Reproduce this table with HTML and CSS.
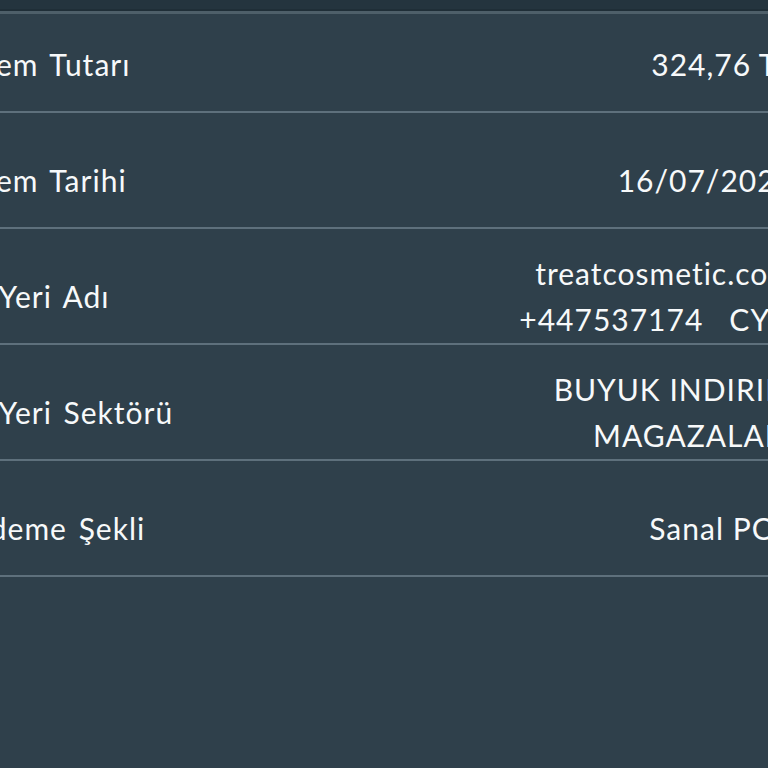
FILE: index.html
```html
<!DOCTYPE html>
<html lang="tr">
<head>
<meta charset="utf-8">
<link rel="stylesheet" href="styles.css">
</head>
<body>
<div class="screen">
  <div class="topbar"></div>
  <div class="viewport">
    <div class="list">
      <div class="row">
        <div class="label">İşlem Tutarı</div>
        <div class="value">324,76 TL</div>
      </div>
      <div class="row">
        <div class="label">İşlem Tarihi</div>
        <div class="value">16/07/2024</div>
      </div>
      <div class="row">
        <div class="label">İş Yeri Adı</div>
        <div class="value">treatcosmetic.com<br>+447537174&nbsp;&nbsp;&nbsp;CYO</div>
      </div>
      <div class="row">
        <div class="label">İş Yeri Sektörü</div>
        <div class="value">BUYUK INDIRIM<br>MAGAZALARI</div>
      </div>
      <div class="row">
        <div class="label">Ödeme Şekli</div>
        <div class="value">Sanal POS</div>
      </div>
    </div>
  </div>
</div>
</body>
</html>
```
FILE: styles.css
```css
html, body {
  margin: 0;
  padding: 0;
  height: 100%;
}
body {
  background: #2f404b;
  font-family: Lato, "Open Sans", sans-serif;
  color: #f7f9fa;
}
.screen {
  height: 768px;
  overflow: hidden;
  display: flex;
  flex-direction: column;
}
.topbar {
  height: 11px;
  background: #24343e;
  border-bottom: 3px solid #4e5f69;
  box-shadow: inset 0 -2px 0 #1f2e37;
  flex: none;
}
.viewport {
  flex: 1;
  overflow: hidden;
}
.list {
  margin-top: -17px;
  margin-left: -35px;
  width: calc(100% + 61px);
}
.row {
  box-sizing: border-box;
  height: 116px;
  padding-top: 20px;
  border-bottom: 2px solid #5e707c;
  display: flex;
  align-items: center;
  justify-content: space-between;
}
.label {
  font-size: 30px;
  line-height: 46px;
  letter-spacing: 1px;
  word-spacing: 3px;
  white-space: nowrap;
}
.value {
  font-size: 30px;
  line-height: 46px;
  letter-spacing: 1px;
  text-align: right;
  white-space: nowrap;
}
```
